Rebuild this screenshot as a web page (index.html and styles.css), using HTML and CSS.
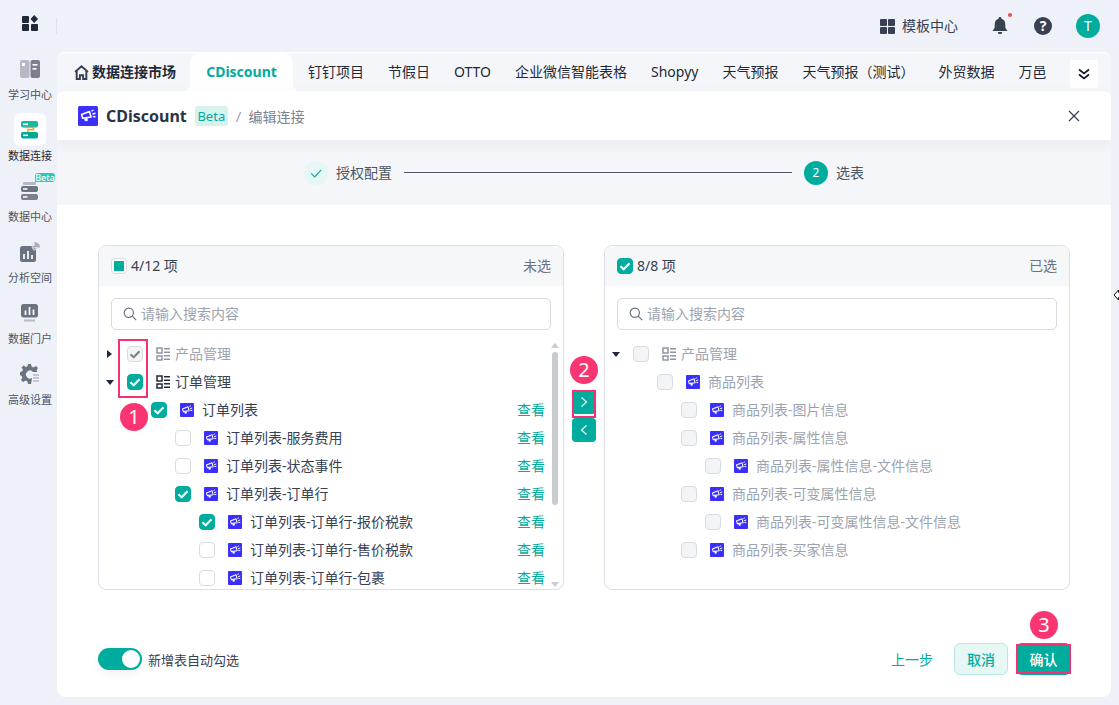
FILE: index.html
```html
<!DOCTYPE html>
<html lang="zh-CN">
<head>
    <meta charset="UTF-8">
    <meta name="viewport" content="width=device-width, initial-scale=1.0">
    <title>CDiscount 编辑连接</title>
    <link rel="stylesheet" href="styles.css">
</head>
<body>
    <svg class="defs" width="0" height="0">
        <symbol id="logo" viewBox="0 0 20 20">
            <rect width="20" height="20" rx="1.5" fill="#3a2ffb"/>
            <path d="M3.500 8.500l8-3 1.500 5.500-8.300 1.300z" fill="none" stroke="#fff" stroke-width="1.500" stroke-linejoin="round"/>
            <path d="M6.500 12.500l.8 2.500 2.200-.6-.6-2.400" fill="#fff" stroke="#fff" stroke-width="0.800"/>
            <path d="M13.500 5.200l2-1.200M14.500 8l3-.8M14.800 10.500l2.700.3" stroke="#fff" stroke-width="1.400"/>
        </symbol>
        <symbol id="group" viewBox="0 0 14 14">
            <path d="M1 1h5v5H1zM1 9h5v4H1z" fill="none" stroke="currentColor" stroke-width="1.500"/>
            <path d="M8 1.800h6M8 5.200h6M8 8.800h6M8 12.200h6" stroke="currentColor" stroke-width="1.500"/>
        </symbol>
        <symbol id="tick" viewBox="0 0 16 16">
            <path d="M3.500 8.200l3.200 3 5.800-6" fill="none" stroke="currentColor" stroke-width="2.200"/>
        </symbol>
        <symbol id="search" viewBox="0 0 14 14">
            <circle cx="5.800" cy="5.800" r="4.600" fill="none" stroke="currentColor" stroke-width="1.200"/>
            <path d="M9.200 9.200l4 4" stroke="currentColor" stroke-width="1.200"/>
        </symbol>
    </svg>

    <aside class="sidebar">
        <div class="logo-row">
            <svg width="16" height="16" viewBox="0 0 16 16" fill="#1f2937">
                <rect x="0" y="1" width="7" height="7" rx="1"/>
                <rect x="0" y="9" width="7" height="7" rx="1"/>
                <rect x="9" y="9" width="7" height="7" rx="1"/>
                <path d="M12.200 0l3.800 4-3.800 4-3.700-4z"/>
            </svg>
        </div>
        <nav class="nav">
            <div class="nav-item">
                <span class="nav-icon">
                    <svg width="20" height="18" viewBox="0 0 20 18">
                        <rect width="9.500" height="18" rx="2" fill="#b4b9c5"/>
                        <rect x="10.500" width="9.500" height="18" rx="2" fill="#7a808e"/>
                        <rect x="2" y="3" width="3" height="3" fill="#fff"/>
                        <rect x="12.500" y="4" width="5" height="1.600" fill="#fff"/>
                        <rect x="12.500" y="8" width="4" height="1.600" fill="#fff"/>
                    </svg>
                </span>
                <span>学习中心</span>
            </div>
            <div class="nav-item active">
                <span class="nav-icon">
                    <svg width="18" height="18" viewBox="0 0 18 18">
                        <rect width="17" height="6.500" rx="2" fill="#14b8a6"/>
                        <rect y="11" width="17" height="6.500" rx="2" fill="#00a896"/>
                        <path d="M4 6.500h8.500v2.300H7v2.200" fill="none" stroke="#f5a524" stroke-width="1.600"/>
                        <rect x="2" y="13.500" width="5" height="1.600" fill="#fff"/>
                        <rect x="2" y="2.500" width="5" height="1.600" fill="#fff"/>
                    </svg>
                </span>
                <span>数据连接</span>
            </div>
            <div class="nav-item">
                <span class="nav-icon">
                    <svg width="18" height="18" viewBox="0 0 18 18">
                        <rect x="2" y="0" width="13" height="3" rx="1" fill="#b4b9c5"/>
                        <rect y="4" width="17" height="6" rx="2" fill="#6b7280"/>
                        <rect y="12" width="17" height="6" rx="2" fill="#7a808e"/>
                        <rect x="2" y="6.200" width="4.500" height="1.500" fill="#fff"/>
                        <rect x="2" y="14.200" width="4.500" height="1.500" fill="#fff"/>
                    </svg>
                </span>
                <span>数据中心</span>
                <b class="nav-beta">Beta</b>
            </div>
            <div class="nav-item">
                <span class="nav-icon">
                    <svg width="20" height="20" viewBox="0 0 20 20">
                        <rect y="4" width="16" height="16" rx="2.500" fill="#6b7280"/>
                        <path d="M14.500 0a5.500 5.500 0 0 1 5.500 5.500h-5.500z" fill="#a8adb9"/>
                        <path d="M13 1.500a5.500 5.500 0 0 0 1 7l4-3h-5z" fill="#a8adb9" stroke="#eff1f8" stroke-width="0.600"/>
                        <path d="M4 17v-5M8 17V9M12 17v-4" stroke="#fff" stroke-width="1.700"/>
                    </svg>
                </span>
                <span>分析空间</span>
            </div>
            <div class="nav-item">
                <span class="nav-icon">
                    <svg width="18" height="18" viewBox="0 0 18 18">
                        <rect width="17" height="13.500" rx="2.500" fill="#6b7280"/>
                        <rect x="3" y="15.500" width="11" height="2" fill="#b4b9c5"/>
                        <path d="M4.500 11V6.500M8.500 11V3M12.500 11V5.500" stroke="#fff" stroke-width="1.700"/>
                    </svg>
                </span>
                <span>数据门户</span>
            </div>
            <div class="nav-item">
                <span class="nav-icon">
                    <svg width="20" height="20" viewBox="0 0 20 20">
                        <path d="M8 0h3l.5 2.600 2 .8L16 2l2 2-1.400 2.300.6 1.700H13a4 4 0 1 0-1 6l-.5 3.600-.5 2.400H8l-.5-2.600-2-.8L3 18l-2-2 1.400-2.300-.8-2L-.5 11V8l2.600-.5.8-2L1.500 3.500 3.500 1.500l2.300 1.400 1.700-.7z" fill="#6b7280"/>
                        <path d="M13 11h6M13 14h6M13 17h6" stroke="#b4b9c5" stroke-width="1.500"/>
                    </svg>
                </span>
                <span>高级设置</span>
            </div>
        </nav>
    </aside>

    <div class="page">
        <header class="topbar">
            <div class="template-link">
                <svg width="15" height="15" viewBox="0 0 15 15" fill="#374151">
                    <rect width="7" height="7" rx="1"/>
                    <rect x="8" width="7" height="7" rx="1"/>
                    <rect y="8" width="7" height="7" rx="1"/>
                    <rect x="8" y="8" width="7" height="7" rx="1"/>
                </svg>
                <span class="txt">模板中心</span>
            </div>
            <div class="bell">
                <svg width="16" height="18" viewBox="0 0 16 18" fill="#374151">
                    <path d="M8 0a1.400 1.400 0 0 1 1.400 1.700C12 2.400 13.300 4.500 13.300 7.500v3.300L15.500 14H.5l2.200-3.200V7.500c0-3 1.300-5.100 3.900-5.800A1.400 1.400 0 0 1 8 0z"/>
                    <path d="M5.800 15h4.400a2.200 2.200 0 0 1-4.400 0z"/>
                </svg>
                <i class="bell-dot"></i>
            </div>
            <div class="help">?</div>
            <div class="avatar">T</div>
        </header>

        <main class="card">
            <div class="tabs">
                <div class="tab tab-home">
                    <svg width="15" height="15" viewBox="0 0 14 14">
                        <path d="M1 6.500L7 1.200l6 5.300M2.500 5.500V13h3V9.500h3V13h3V5.500" fill="none" stroke="#374151" stroke-width="1.800"/>
                    </svg>
                    <span>数据连接市场</span>
                </div>
                <div class="tab tab-active">CDiscount</div>
                <div class="tab">钉钉项目</div>
                <div class="tab">节假日</div>
                <div class="tab">OTTO</div>
                <div class="tab">企业微信智能表格</div>
                <div class="tab">Shopyy</div>
                <div class="tab">天气预报</div>
                <div class="tab">天气预报（测试）</div>
                <div class="tab">外贸数据</div>
                <div class="tab">万邑</div>
                <div class="tab-more">
                    <svg width="14" height="14" viewBox="0 0 14 14">
                        <path d="M2 2.500l5 4 5-4M2 7.500l5 4 5-4" fill="none" stroke="#111827" stroke-width="1.700"/>
                    </svg>
                </div>
            </div>

            <div class="editor">
                <div class="editor-head">
                    <svg class="head-logo" width="20" height="20"><use href="#logo"/></svg>
                    <span class="head-name">CDiscount</span>
                    <span class="head-beta">Beta</span>
                    <span class="head-sep">/</span>
                    <span class="head-crumb">编辑连接</span>
                    <svg class="head-close" width="12" height="12" viewBox="0 0 12 12">
                        <path d="M1 1l10 10M11 1L1 11" stroke="#374151" stroke-width="1.300"/>
                    </svg>
                </div>

                <div class="steps">
                    <span class="step-done">
                        <svg width="14" height="14" viewBox="0 0 16 16">
                            <path d="M2.500 8.500l4 4 7.500-8" fill="none" stroke="#00ac9e" stroke-width="1.300"/>
                        </svg>
                    </span>
                    <span class="step-text txt">授权配置</span>
                    <span class="step-line"></span>
                    <span class="step-num">2</span>
                    <span class="step-text txt">选表</span>
                </div>

                <div class="transfer">
                    <section class="panel">
                        <div class="panel-head">
                            <span class="check part"></span>
                            <span class="panel-count txt">4/12 项</span>
                            <span class="panel-tag txt">未选</span>
                        </div>
                        <div class="search">
                            <svg width="14" height="14"><use href="#search"/></svg>
                            <span class="txt">请输入搜索内容</span>
                        </div>
                        <div class="tree">
                            <div class="row lv0 muted">
                                <i class="caret right"></i>
                                <span class="check off-on"><svg width="16" height="16"><use href="#tick"/></svg></span>
                                <svg class="row-group" width="14" height="14"><use href="#group"/></svg>
                                <span class="row-text txt">产品管理</span>
                            </div>
                            <div class="row lv0">
                                <i class="caret down"></i>
                                <span class="check on"><svg width="16" height="16"><use href="#tick"/></svg></span>
                                <svg class="row-group" width="14" height="14"><use href="#group"/></svg>
                                <span class="row-text txt">订单管理</span>
                            </div>
                            <div class="row lv1">
                                <span class="check on"><svg width="16" height="16"><use href="#tick"/></svg></span>
                                <svg class="row-icon" width="14" height="14"><use href="#logo"/></svg>
                                <span class="row-text txt">订单列表</span>
                                <a class="row-link txt">查看</a>
                            </div>
                            <div class="row lv2">
                                <span class="check"></span>
                                <svg class="row-icon" width="14" height="14"><use href="#logo"/></svg>
                                <span class="row-text txt">订单列表-服务费用</span>
                                <a class="row-link txt">查看</a>
                            </div>
                            <div class="row lv2">
                                <span class="check"></span>
                                <svg class="row-icon" width="14" height="14"><use href="#logo"/></svg>
                                <span class="row-text txt">订单列表-状态事件</span>
                                <a class="row-link txt">查看</a>
                            </div>
                            <div class="row lv2">
                                <span class="check on"><svg width="16" height="16"><use href="#tick"/></svg></span>
                                <svg class="row-icon" width="14" height="14"><use href="#logo"/></svg>
                                <span class="row-text txt">订单列表-订单行</span>
                                <a class="row-link txt">查看</a>
                            </div>
                            <div class="row lv3">
                                <span class="check on"><svg width="16" height="16"><use href="#tick"/></svg></span>
                                <svg class="row-icon" width="14" height="14"><use href="#logo"/></svg>
                                <span class="row-text txt">订单列表-订单行-报价税款</span>
                                <a class="row-link txt">查看</a>
                            </div>
                            <div class="row lv3">
                                <span class="check"></span>
                                <svg class="row-icon" width="14" height="14"><use href="#logo"/></svg>
                                <span class="row-text txt">订单列表-订单行-售价税款</span>
                                <a class="row-link txt">查看</a>
                            </div>
                            <div class="row lv3">
                                <span class="check"></span>
                                <svg class="row-icon" width="14" height="14"><use href="#logo"/></svg>
                                <span class="row-text txt">订单列表-订单行-包裹</span>
                                <a class="row-link txt">查看</a>
                            </div>
                        </div>
                        <div class="scrollbar">
                            <i class="scroll-up"></i>
                            <i class="scroll-thumb"></i>
                            <i class="scroll-down"></i>
                        </div>
                    </section>

                    <div class="move-btns">
                        <button class="move">
                            <svg width="8" height="12" viewBox="0 0 8 12"><path d="M1.500 1.500L6.500 6l-5 4.500" fill="none" stroke="#fff" stroke-width="1.100"/></svg>
                        </button>
                        <button class="move">
                            <svg width="8" height="12" viewBox="0 0 8 12"><path d="M6.500 1.500L1.500 6l5 4.500" fill="none" stroke="#fff" stroke-width="1.100"/></svg>
                        </button>
                    </div>

                    <section class="panel">
                        <div class="panel-head">
                            <span class="check on"><svg width="16" height="16"><use href="#tick"/></svg></span>
                            <span class="panel-count txt">8/8 项</span>
                            <span class="panel-tag txt">已选</span>
                        </div>
                        <div class="search">
                            <svg width="14" height="14"><use href="#search"/></svg>
                            <span class="txt">请输入搜索内容</span>
                        </div>
                        <div class="tree">
                            <div class="row lv0 muted">
                                <i class="caret down"></i>
                                <span class="check off"></span>
                                <svg class="row-group" width="14" height="14"><use href="#group"/></svg>
                                <span class="row-text txt">产品管理</span>
                            </div>
                            <div class="row lv1 muted">
                                <span class="check off"></span>
                                <svg class="row-icon" width="14" height="14"><use href="#logo"/></svg>
                                <span class="row-text txt">商品列表</span>
                            </div>
                            <div class="row lv2 muted">
                                <span class="check off"></span>
                                <svg class="row-icon" width="14" height="14"><use href="#logo"/></svg>
                                <span class="row-text txt">商品列表-图片信息</span>
                            </div>
                            <div class="row lv2 muted">
                                <span class="check off"></span>
                                <svg class="row-icon" width="14" height="14"><use href="#logo"/></svg>
                                <span class="row-text txt">商品列表-属性信息</span>
                            </div>
                            <div class="row lv3 muted">
                                <span class="check off"></span>
                                <svg class="row-icon" width="14" height="14"><use href="#logo"/></svg>
                                <span class="row-text txt">商品列表-属性信息-文件信息</span>
                            </div>
                            <div class="row lv2 muted">
                                <span class="check off"></span>
                                <svg class="row-icon" width="14" height="14"><use href="#logo"/></svg>
                                <span class="row-text txt">商品列表-可变属性信息</span>
                            </div>
                            <div class="row lv3 muted">
                                <span class="check off"></span>
                                <svg class="row-icon" width="14" height="14"><use href="#logo"/></svg>
                                <span class="row-text txt">商品列表-可变属性信息-文件信息</span>
                            </div>
                            <div class="row lv2 muted">
                                <span class="check off"></span>
                                <svg class="row-icon" width="14" height="14"><use href="#logo"/></svg>
                                <span class="row-text txt">商品列表-买家信息</span>
                            </div>
                        </div>
                    </section>
                </div>

                <div class="footer">
                    <span class="switch"><i></i></span>
                    <span class="switch-label">新增表自动勾选</span>
                    <span class="prev">上一步</span>
                    <button class="btn-cancel">取消</button>
                    <button class="btn-ok">确认</button>
                </div>
            </div>
        </main>
    </div>

    <!-- red marks drawn on top of the screenshot -->
    <div class="mark-box box-checks"></div>
    <div class="mark-box box-move"></div>
    <div class="mark-box box-ok"></div>
    <div class="mark-num num-1">1</div>
    <div class="mark-num num-2">2</div>
    <div class="mark-num num-3">3</div>
    <svg class="resize-cursor" width="8" height="12" viewBox="0 0 8 12">
        <path d="M5.500 1L1 6l4.500 5V8.500H8v-5H5.500z" fill="#fff" stroke="#111" stroke-width="1"/>
    </svg>
</body>
</html>
```

FILE: styles.css
```css
* {
    margin: 0;
    padding: 0;
    box-sizing: border-box;
}

body {
    font-family: "Noto Sans", "Noto Sans CJK SC", sans-serif;
    display: flex;
    width: 1119px;
    height: 705px;
    background: #eff1f8;
    color: #1f2937;
    font-size: 14px;
    overflow: hidden;
}

.defs {
    display: none;
}

/* nudge so the text sits 1px higher, same as the app */
.txt {
    padding-bottom: 2px;
}

/* sidebar */
.sidebar {
    width: 57px;
    flex: none;
}

.logo-row {
    height: 52px;
    padding: 15px 0 0 22px;
    position: relative;
}

.logo-row::after {
    content: "";
    position: absolute;
    right: 0;
    top: 18px;
    height: 16px;
    width: 1px;
    background: #dfe1e8;
}

.nav-item {
    height: 61px;
    padding-left: 3px;
    display: flex;
    flex-direction: column;
    align-items: center;
    position: relative;
    font-size: 11px;
    line-height: 14px;
    color: #4b5563;
}

.nav-icon {
    width: 32px;
    height: 33px;
    margin-bottom: 3px;
    display: flex;
    align-items: center;
    justify-content: center;
    border-radius: 6px;
}

.nav-item.active .nav-icon {
    background: #fff;
}

.nav-item.active {
    color: #1f2937;
}

.nav-beta {
    position: absolute;
    top: -1px;
    left: 35px;
    width: 20px;
    height: 9px;
    border-radius: 3px 3px 3px 0;
    background: #2dc7b5;
    color: #fff;
    font-size: 9px;
    line-height: 9px;
    font-weight: 500;
    text-align: center;
}

/* top bar */
.page {
    width: 1054px;
    flex: none;
    display: flex;
    flex-direction: column;
}

.topbar {
    height: 52px;
    flex: none;
    display: flex;
    align-items: center;
    padding-right: 11px;
    justify-content: flex-end;
}

.template-link {
    display: flex;
    align-items: center;
    gap: 7px;
    color: #374151;
    margin-right: 34px;
}

.bell {
    position: relative;
    width: 16px;
    height: 18px;
    margin-right: 26px;
}

.bell-dot {
    position: absolute;
    top: -4px;
    right: -4px;
    width: 4px;
    height: 4px;
    border-radius: 50%;
    background: #f04d4d;
}

.help {
    width: 18px;
    height: 18px;
    border-radius: 50%;
    background: #374151;
    color: #fff;
    font-size: 14px;
    font-weight: 700;
    line-height: 18px;
    text-align: center;
    margin-right: 24px;
}

.avatar {
    width: 24px;
    height: 24px;
    border-radius: 50%;
    background: #00ac9e;
    color: #fff;
    font-size: 14px;
    line-height: 24px;
    text-align: center;
}

/* card and tabs */
.card {
    width: 1054px;
    height: 645px;
    border-radius: 8px;
    background: #f5f6fa;
    border-top: 1px solid #fff;
    overflow: hidden;
    display: flex;
    flex-direction: column;
}

.tabs {
    height: 38px;
    flex: none;
    display: flex;
    align-items: center;
    padding-left: 16px;
    position: relative;
}

.tab {
    padding: 0 12px;
    line-height: 38px;
    font-size: 14px;
    white-space: nowrap;
    color: #1f2937;
}

.tab-home {
    display: flex;
    align-items: center;
    gap: 3px;
    font-weight: 700;
    padding: 0 14px 0 1px;
}

.tab-active {
    width: 103px;
    padding: 0;
    margin-right: 3px;
    text-align: center;
    color: #00ac9e;
    font-weight: 700;
    background: #fff;
    border-radius: 10px 10px 0 0;
    position: relative;
}

.tab-active::before, .tab-active::after {
    content: "";
    position: absolute;
    bottom: 0;
    width: 8px;
    height: 8px;
}

.tab-active::before {
    left: -8px;
    background: radial-gradient(circle at 0 0, #f5f6fa 8px, #fff 8.5px);
}

.tab-active::after {
    right: -8px;
    background: radial-gradient(circle at 100% 0, #f5f6fa 8px, #fff 8.5px);
}

.tab-more {
    position: absolute;
    left: 1013px;
    top: 7px;
    width: 28px;
    height: 28px;
    background: #fff;
    display: flex;
    align-items: center;
    justify-content: center;
}

/* editor */
.editor {
    flex: 1;
    background: #fff;
    border-radius: 8px;
    display: flex;
    flex-direction: column;
    min-height: 0;
}

.editor-head {
    height: 49px;
    flex: none;
    display: flex;
    align-items: center;
    padding: 0 31px 0 21px;
    box-shadow: 0 4px 12px rgba(60, 70, 100, 0.07);
    position: relative;
}

.head-name {
    margin-left: 8px;
    font-size: 16px;
    font-weight: 700;
    color: #2b3445;
}

.head-beta {
    margin-left: 8px;
    width: 33px;
    height: 20px;
    background: #d5f2ee;
    color: #00ac9e;
    border-radius: 3px;
    font-size: 13px;
    line-height: 20px;
    text-align: center;
}

.head-sep {
    margin-left: 8px;
    color: #9ca3af;
    font-size: 15px;
}

.head-crumb {
    margin-left: 7px;
    color: #7c8391;
    font-size: 14px;
}

.head-close {
    margin-left: auto;
}

.steps {
    height: 65px;
    flex: none;
    background: #f5f6fa;
    display: flex;
    align-items: center;
    padding-left: 247px;
}

.step-done, .step-num {
    width: 24px;
    height: 24px;
    border-radius: 50%;
    display: flex;
    align-items: center;
    justify-content: center;
}

.step-done {
    background: #e6f7f5;
}

.step-num {
    background: #00ac9e;
    color: #fff;
    font-size: 12px;
}

.step-text {
    margin-left: 8px;
    color: #4b5563;
}

.step-line {
    width: 388px;
    height: 1px;
    background: #4b5563;
    margin: 0 12px;
}

/* transfer */
.transfer {
    display: flex;
    align-items: flex-start;
    padding: 40px 41px 0;
}

.panel {
    width: 466px;
    height: 345px;
    flex: none;
    border: 1px solid #dcdfe6;
    border-radius: 8px;
    overflow: hidden;
    position: relative;
}

.panel-head {
    height: 40px;
    background: #f6f7f9;
    display: flex;
    align-items: center;
    padding: 0 12px;
}

.panel-count {
    margin-left: 4px;
    color: #374151;
    font-size: 14px;
}

.panel-tag {
    margin-left: auto;
    color: #6b7280;
    font-size: 14px;
}

.search {
    margin: 12px 12px 0;
    height: 32px;
    border: 1px solid #d8dbe2;
    border-radius: 5px;
    display: flex;
    align-items: center;
    gap: 4px;
    padding-left: 11px;
    color: #9ca3af;
}

.search svg {
    color: #6b7280;
}

.tree {
    padding-top: 10px;
}

.row {
    height: 28px;
    display: flex;
    align-items: center;
    color: #374151;
}

.lv0 {
    padding-left: 8px;
}

.lv1 {
    padding-left: 52px;
}

.lv2 {
    padding-left: 76px;
}

.lv3 {
    padding-left: 100px;
}

.caret {
    width: 20px;
    flex: none;
    display: block;
    height: 0;
    position: relative;
}

.caret::before {
    content: "";
    position: absolute;
    left: 0;
    top: -4px;
    border-style: solid;
}

.caret.right::before {
    border-width: 4px 0 4px 5px;
    border-color: transparent transparent transparent #1f2937;
}

.caret.down::before {
    top: -2px;
    left: -1px;
    border-width: 5px 4px 0 4px;
    border-color: #1f2937 transparent transparent transparent;
}

.check {
    width: 16px;
    height: 16px;
    flex: none;
    border: 1px solid #d8dbe2;
    border-radius: 4px;
    background: #fff;
    display: flex;
    align-items: center;
    justify-content: center;
}

.check svg {
    flex: none;
}

.check.on {
    background: #00ac9e;
    border-color: #00ac9e;
    color: #fff;
}

.check.off {
    background: #f3f4f6;
}

.check.off-on {
    background: #f3f4f6;
    color: #7c8391;
}

.check.part::after {
    content: "";
    width: 10px;
    height: 10px;
    background: #00ac9e;
}

.row-group {
    margin: 0 5px 0 13px;
    flex: none;
    color: #1f2937;
}

.row-icon {
    margin: 0 8px 0 13px;
    flex: none;
}

.muted {
    color: #9ca3af;
}

.muted .row-group {
    color: #8e95a2;
}

.row-link {
    margin-left: auto;
    margin-right: 18px;
    color: #00ac9e;
}

.scrollbar {
    position: absolute;
    right: 0;
    top: 95px;
    bottom: 0;
    width: 16px;
}

.scroll-up, .scroll-down {
    position: absolute;
    left: 4px;
    border-style: solid;
}

.scroll-up {
    top: 2px;
    border-width: 0 4px 5px 4px;
    border-color: transparent transparent #c8cbd0 transparent;
}

.scroll-down {
    bottom: 2px;
    border-width: 5px 4px 0 4px;
    border-color: #c8cbd0 transparent transparent transparent;
}

.scroll-thumb {
    position: absolute;
    top: 11px;
    left: 5px;
    width: 6px;
    height: 153px;
    border-radius: 3px;
    background: #c8cbd0;
}

.move-btns {
    width: 40px;
    flex: none;
    padding: 145px 8px 0;
    display: flex;
    flex-direction: column;
    gap: 4px;
}

.move {
    width: 24px;
    height: 24px;
    border: none;
    border-radius: 4px;
    background: #00ac9e;
    display: flex;
    align-items: center;
    justify-content: center;
}

/* footer */
.footer {
    display: flex;
    align-items: center;
    padding: 53px 40px 0 41px;
}

.switch {
    width: 44px;
    height: 22px;
    border-radius: 11px;
    background: #00ac9e;
    position: relative;
    box-shadow: 0 3px 8px rgba(0, 0, 0, 0.06);
}

.switch i {
    position: absolute;
    right: 2px;
    top: 2px;
    width: 18px;
    height: 18px;
    border-radius: 50%;
    background: #fff;
}

.switch-label {
    margin-left: 6px;
    font-size: 13px;
    color: #374151;
}

.prev {
    margin-left: auto;
    color: #00ac9e;
}

.btn-cancel, .btn-ok {
    font-family: inherit;
    font-size: 14px;
    font-weight: 500;
    height: 32px;
    width: 54px;
    border-radius: 6px;
}

.btn-cancel {
    margin-left: 21px;
    background: #e6f7f5;
    border: 1px solid #b8e8e2;
    color: #00ac9e;
}

.btn-ok {
    margin-left: 8px;
    width: 55px;
    background: #00ac9e;
    border: 1px solid #00ac9e;
    color: #fff;
}

/* red marks, they sit over the page */
.mark-box {
    position: absolute;
    border: 2px solid #f5316f;
}

.box-checks {
    left: 118px;
    top: 339px;
    width: 30px;
    height: 59px;
}

.box-move {
    left: 572px;
    top: 390px;
    width: 24px;
    height: 28px;
}

.box-ok {
    left: 1016px;
    top: 644px;
    width: 55px;
    height: 30px;
}

.mark-num {
    position: absolute;
    width: 28px;
    height: 28px;
    border-radius: 50%;
    background: #fa3572;
    color: #fff;
    font-size: 20px;
    line-height: 28px;
    text-align: center;
}

.num-1 {
    left: 120px;
    top: 403px;
}

.num-2 {
    left: 570px;
    top: 356px;
}

.num-3 {
    left: 1030px;
    top: 611px;
}

.resize-cursor {
    position: absolute;
    left: 1113px;
    top: 289px;
}
```
